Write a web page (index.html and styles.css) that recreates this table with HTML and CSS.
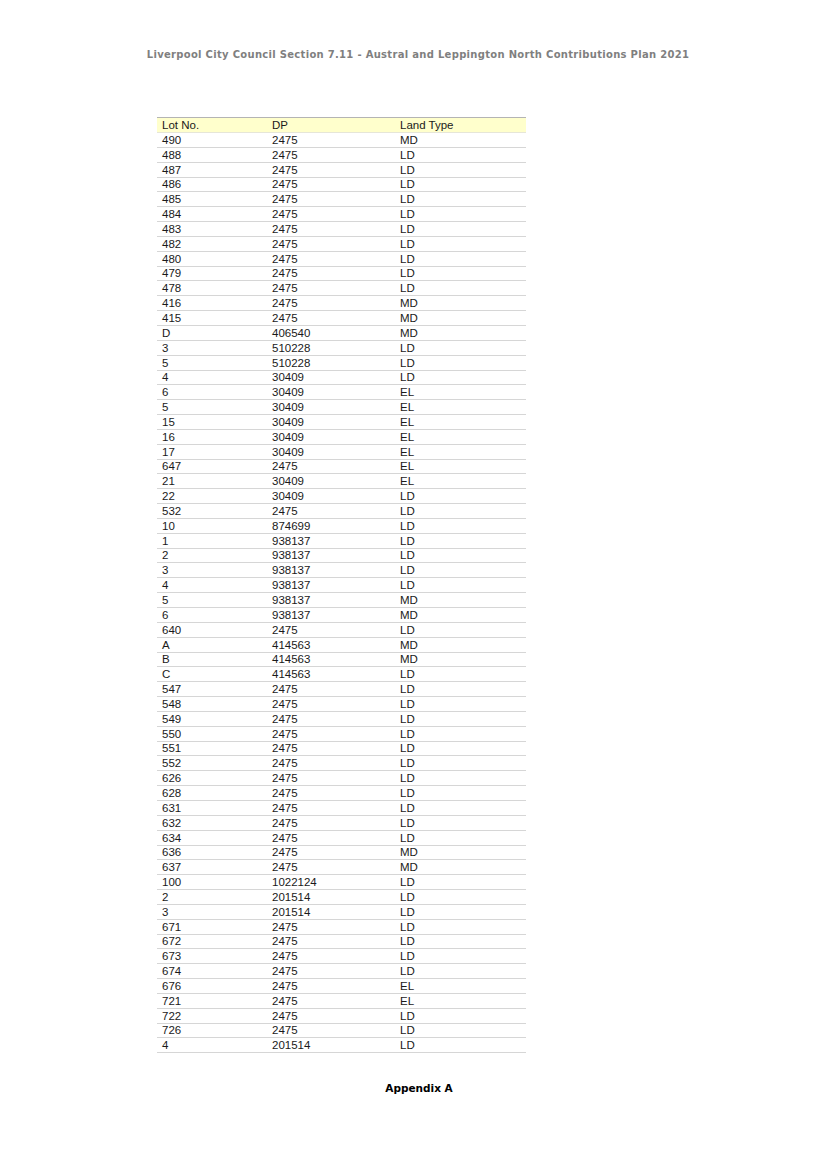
FILE: index.html
```html
<!DOCTYPE html>
<html>
<head>
<meta charset="utf-8">
<link rel="stylesheet" href="styles.css">
</head>
<body>
<div class="page">
  <header class="doc-title">Liverpool City Council Section 7.11 - Austral and Leppington North Contributions Plan 2021</header>
  <table class="lots">
    <thead>
      <tr><th class="c1">Lot No.</th><th class="c2">DP</th><th class="c3">Land Type</th></tr>
    </thead>
    <tbody>
      <tr><td>490</td><td>2475</td><td>MD</td></tr>
      <tr><td>488</td><td>2475</td><td>LD</td></tr>
      <tr><td>487</td><td>2475</td><td>LD</td></tr>
      <tr><td>486</td><td>2475</td><td>LD</td></tr>
      <tr><td>485</td><td>2475</td><td>LD</td></tr>
      <tr><td>484</td><td>2475</td><td>LD</td></tr>
      <tr><td>483</td><td>2475</td><td>LD</td></tr>
      <tr><td>482</td><td>2475</td><td>LD</td></tr>
      <tr><td>480</td><td>2475</td><td>LD</td></tr>
      <tr><td>479</td><td>2475</td><td>LD</td></tr>
      <tr><td>478</td><td>2475</td><td>LD</td></tr>
      <tr><td>416</td><td>2475</td><td>MD</td></tr>
      <tr><td>415</td><td>2475</td><td>MD</td></tr>
      <tr><td>D</td><td>406540</td><td>MD</td></tr>
      <tr><td>3</td><td>510228</td><td>LD</td></tr>
      <tr><td>5</td><td>510228</td><td>LD</td></tr>
      <tr><td>4</td><td>30409</td><td>LD</td></tr>
      <tr><td>6</td><td>30409</td><td>EL</td></tr>
      <tr><td>5</td><td>30409</td><td>EL</td></tr>
      <tr><td>15</td><td>30409</td><td>EL</td></tr>
      <tr><td>16</td><td>30409</td><td>EL</td></tr>
      <tr><td>17</td><td>30409</td><td>EL</td></tr>
      <tr><td>647</td><td>2475</td><td>EL</td></tr>
      <tr><td>21</td><td>30409</td><td>EL</td></tr>
      <tr><td>22</td><td>30409</td><td>LD</td></tr>
      <tr><td>532</td><td>2475</td><td>LD</td></tr>
      <tr><td>10</td><td>874699</td><td>LD</td></tr>
      <tr><td>1</td><td>938137</td><td>LD</td></tr>
      <tr><td>2</td><td>938137</td><td>LD</td></tr>
      <tr><td>3</td><td>938137</td><td>LD</td></tr>
      <tr><td>4</td><td>938137</td><td>LD</td></tr>
      <tr><td>5</td><td>938137</td><td>MD</td></tr>
      <tr><td>6</td><td>938137</td><td>MD</td></tr>
      <tr><td>640</td><td>2475</td><td>LD</td></tr>
      <tr><td>A</td><td>414563</td><td>MD</td></tr>
      <tr><td>B</td><td>414563</td><td>MD</td></tr>
      <tr><td>C</td><td>414563</td><td>LD</td></tr>
      <tr><td>547</td><td>2475</td><td>LD</td></tr>
      <tr><td>548</td><td>2475</td><td>LD</td></tr>
      <tr><td>549</td><td>2475</td><td>LD</td></tr>
      <tr><td>550</td><td>2475</td><td>LD</td></tr>
      <tr><td>551</td><td>2475</td><td>LD</td></tr>
      <tr><td>552</td><td>2475</td><td>LD</td></tr>
      <tr><td>626</td><td>2475</td><td>LD</td></tr>
      <tr><td>628</td><td>2475</td><td>LD</td></tr>
      <tr><td>631</td><td>2475</td><td>LD</td></tr>
      <tr><td>632</td><td>2475</td><td>LD</td></tr>
      <tr><td>634</td><td>2475</td><td>LD</td></tr>
      <tr><td>636</td><td>2475</td><td>MD</td></tr>
      <tr><td>637</td><td>2475</td><td>MD</td></tr>
      <tr><td>100</td><td>1022124</td><td>LD</td></tr>
      <tr><td>2</td><td>201514</td><td>LD</td></tr>
      <tr><td>3</td><td>201514</td><td>LD</td></tr>
      <tr><td>671</td><td>2475</td><td>LD</td></tr>
      <tr><td>672</td><td>2475</td><td>LD</td></tr>
      <tr><td>673</td><td>2475</td><td>LD</td></tr>
      <tr><td>674</td><td>2475</td><td>LD</td></tr>
      <tr><td>676</td><td>2475</td><td>EL</td></tr>
      <tr><td>721</td><td>2475</td><td>EL</td></tr>
      <tr><td>722</td><td>2475</td><td>LD</td></tr>
      <tr><td>726</td><td>2475</td><td>LD</td></tr>
      <tr><td>4</td><td>201514</td><td>LD</td></tr>
    </tbody>
  </table>
  <footer class="doc-footer">Appendix A</footer>
</div>
</body>
</html>
```
FILE: styles.css
```css
html, body {
  margin: 0;
  padding: 0;
  background: #ffffff;
}

.page {
  width: 816px;
  height: 1155px;
  display: flex;
  flex-direction: column;
  align-items: flex-start;
  box-sizing: border-box;
  padding-top: 48px;
}

.doc-title {
  align-self: center;
  font-family: "DejaVu Sans", Verdana, sans-serif;
  font-weight: bold;
  font-size: 10px;
  letter-spacing: 0.3px;
  color: #7f7f7f;
  margin-left: 20px;
  line-height: 14px;
}

.lots {
  margin-top: 55px;
  margin-left: 157px;
  width: 369px;
  border-collapse: collapse;
  table-layout: fixed;
  font-family: "Liberation Sans Narrow", "Arial Narrow", "Liberation Sans", sans-serif;
  font-size: 11.5px;
  color: #1a1a1a;
}

.lots th,
.lots td {
  box-sizing: border-box;
}

.lots .c1 { width: 110px; }
.lots .c2 { width: 128px; }
.lots .c3 { width: 131px; }

.lots th {
  background: #ffffcc;
  border-top: 1px solid #b4b4b4;
  border-bottom: 1px solid #e6e6d8;
  font-weight: normal;
  text-align: left;
  height: 15px;
  padding: 0 0 0 5px;
  line-height: 14px;
}

.lots td {
  height: 14.85px;
  padding: 0 0 0 5px;
  line-height: 13px;
  border-bottom: 1px solid #d6d6d6;
  vertical-align: bottom;
  white-space: nowrap;
}

.doc-footer {
  align-self: center;
  margin-top: 29px;
  font-family: "DejaVu Sans", Verdana, sans-serif;
  font-weight: bold;
  font-size: 10.5px;
  color: #000;
  margin-left: 22px;
}
```
